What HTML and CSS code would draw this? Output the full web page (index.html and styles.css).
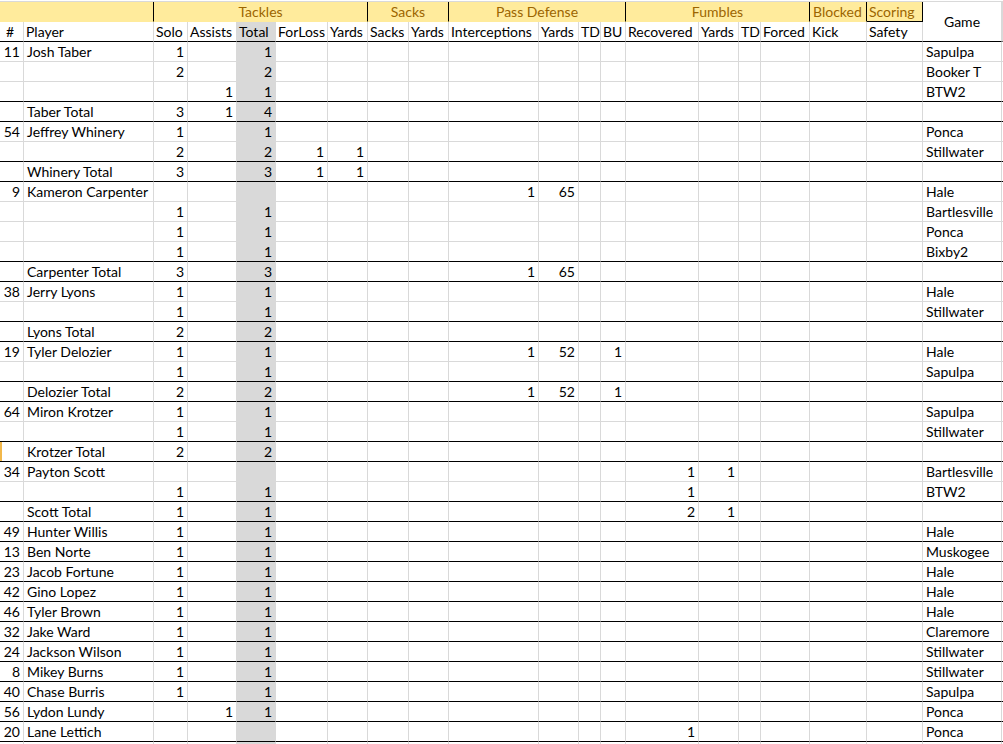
FILE: index.html
```html
<!DOCTYPE html>
<html>
<head>
<meta charset="utf-8">
<title>Defense Stats</title>
<link rel="stylesheet" href="styles.css">
</head>
<body>
<div class="sheet">
  <div class="topline"></div>
  <div class="head">
    <span class="grp g-lead"></span>
    <span class="grp g-tackles">Tackles</span>
    <span class="grp g-sacks">Sacks</span>
    <span class="grp g-pass">Pass Defense</span>
    <span class="grp g-fum">Fumbles</span>
    <span class="grp g-blk">Blocked</span>
    <span class="grp g-score">Scoring</span>
    <span class="game-h">Game</span>
    <span class="extra-h"></span>
    <span class="h hash">#</span><span class="h">Player</span><span class="h">Solo</span><span class="h">Assists</span><span class="h tot">Total</span><span class="h">ForLoss</span><span class="h">Yards</span><span class="h">Sacks</span><span class="h">Yards</span><span class="h">Interceptions</span><span class="h">Yards</span><span class="h">TD</span><span class="h">BU</span><span class="h">Recovered</span><span class="h">Yards</span><span class="h">TD</span><span class="h">Forced</span><span class="h">Kick</span><span class="h">Safety</span>
  </div>

  <div class="row"><span>11</span><span>Josh Taber</span><span>1</span><span></span><span>1</span><span></span><span></span><span></span><span></span><span></span><span></span><span></span><span></span><span></span><span></span><span></span><span></span><span></span><span></span><span>Sapulpa</span><span></span></div>
  <div class="row"><span></span><span></span><span>2</span><span></span><span>2</span><span></span><span></span><span></span><span></span><span></span><span></span><span></span><span></span><span></span><span></span><span></span><span></span><span></span><span></span><span>Booker T</span><span></span></div>
  <div class="row dk"><span></span><span></span><span></span><span>1</span><span>1</span><span></span><span></span><span></span><span></span><span></span><span></span><span></span><span></span><span></span><span></span><span></span><span></span><span></span><span></span><span>BTW2</span><span></span></div>
  <div class="row dk"><span></span><span>Taber Total</span><span>3</span><span>1</span><span>4</span><span></span><span></span><span></span><span></span><span></span><span></span><span></span><span></span><span></span><span></span><span></span><span></span><span></span><span></span><span></span><span></span></div>

  <div class="row"><span>54</span><span>Jeffrey Whinery</span><span>1</span><span></span><span>1</span><span></span><span></span><span></span><span></span><span></span><span></span><span></span><span></span><span></span><span></span><span></span><span></span><span></span><span></span><span>Ponca</span><span></span></div>
  <div class="row dk"><span></span><span></span><span>2</span><span></span><span>2</span><span>1</span><span>1</span><span></span><span></span><span></span><span></span><span></span><span></span><span></span><span></span><span></span><span></span><span></span><span></span><span>Stillwater</span><span></span></div>
  <div class="row dk"><span></span><span>Whinery Total</span><span>3</span><span></span><span>3</span><span>1</span><span>1</span><span></span><span></span><span></span><span></span><span></span><span></span><span></span><span></span><span></span><span></span><span></span><span></span><span></span><span></span></div>

  <div class="row"><span>9</span><span>Kameron Carpenter</span><span></span><span></span><span></span><span></span><span></span><span></span><span></span><span>1</span><span>65</span><span></span><span></span><span></span><span></span><span></span><span></span><span></span><span></span><span>Hale</span><span></span></div>
  <div class="row"><span></span><span></span><span>1</span><span></span><span>1</span><span></span><span></span><span></span><span></span><span></span><span></span><span></span><span></span><span></span><span></span><span></span><span></span><span></span><span></span><span>Bartlesville</span><span></span></div>
  <div class="row"><span></span><span></span><span>1</span><span></span><span>1</span><span></span><span></span><span></span><span></span><span></span><span></span><span></span><span></span><span></span><span></span><span></span><span></span><span></span><span></span><span>Ponca</span><span></span></div>
  <div class="row dk"><span></span><span></span><span>1</span><span></span><span>1</span><span></span><span></span><span></span><span></span><span></span><span></span><span></span><span></span><span></span><span></span><span></span><span></span><span></span><span></span><span>Bixby2</span><span></span></div>
  <div class="row dk"><span></span><span>Carpenter Total</span><span>3</span><span></span><span>3</span><span></span><span></span><span></span><span></span><span>1</span><span>65</span><span></span><span></span><span></span><span></span><span></span><span></span><span></span><span></span><span></span><span></span></div>

  <div class="row"><span>38</span><span>Jerry Lyons</span><span>1</span><span></span><span>1</span><span></span><span></span><span></span><span></span><span></span><span></span><span></span><span></span><span></span><span></span><span></span><span></span><span></span><span></span><span>Hale</span><span></span></div>
  <div class="row dk"><span></span><span></span><span>1</span><span></span><span>1</span><span></span><span></span><span></span><span></span><span></span><span></span><span></span><span></span><span></span><span></span><span></span><span></span><span></span><span></span><span>Stillwater</span><span></span></div>
  <div class="row dk"><span></span><span>Lyons Total</span><span>2</span><span></span><span>2</span><span></span><span></span><span></span><span></span><span></span><span></span><span></span><span></span><span></span><span></span><span></span><span></span><span></span><span></span><span></span><span></span></div>

  <div class="row"><span>19</span><span>Tyler Delozier</span><span>1</span><span></span><span>1</span><span></span><span></span><span></span><span></span><span>1</span><span>52</span><span></span><span>1</span><span></span><span></span><span></span><span></span><span></span><span></span><span>Hale</span><span></span></div>
  <div class="row dk"><span></span><span></span><span>1</span><span></span><span>1</span><span></span><span></span><span></span><span></span><span></span><span></span><span></span><span></span><span></span><span></span><span></span><span></span><span></span><span></span><span>Sapulpa</span><span></span></div>
  <div class="row dk"><span></span><span>Delozier Total</span><span>2</span><span></span><span>2</span><span></span><span></span><span></span><span></span><span>1</span><span>52</span><span></span><span>1</span><span></span><span></span><span></span><span></span><span></span><span></span><span></span><span></span></div>

  <div class="row"><span>64</span><span>Miron Krotzer</span><span>1</span><span></span><span>1</span><span></span><span></span><span></span><span></span><span></span><span></span><span></span><span></span><span></span><span></span><span></span><span></span><span></span><span></span><span>Sapulpa</span><span></span></div>
  <div class="row dk"><span></span><span></span><span>1</span><span></span><span>1</span><span></span><span></span><span></span><span></span><span></span><span></span><span></span><span></span><span></span><span></span><span></span><span></span><span></span><span></span><span>Stillwater</span><span></span></div>
  <div class="row dk sel"><span></span><span>Krotzer Total</span><span>2</span><span></span><span>2</span><span></span><span></span><span></span><span></span><span></span><span></span><span></span><span></span><span></span><span></span><span></span><span></span><span></span><span></span><span></span><span></span></div>

  <div class="row"><span>34</span><span>Payton Scott</span><span></span><span></span><span></span><span></span><span></span><span></span><span></span><span></span><span></span><span></span><span></span><span>1</span><span>1</span><span></span><span></span><span></span><span></span><span>Bartlesville</span><span></span></div>
  <div class="row dk"><span></span><span></span><span>1</span><span></span><span>1</span><span></span><span></span><span></span><span></span><span></span><span></span><span></span><span></span><span>1</span><span></span><span></span><span></span><span></span><span></span><span>BTW2</span><span></span></div>
  <div class="row dk"><span></span><span>Scott Total</span><span>1</span><span></span><span>1</span><span></span><span></span><span></span><span></span><span></span><span></span><span></span><span></span><span>2</span><span>1</span><span></span><span></span><span></span><span></span><span></span><span></span></div>

  <div class="row dk"><span>49</span><span>Hunter Willis</span><span>1</span><span></span><span>1</span><span></span><span></span><span></span><span></span><span></span><span></span><span></span><span></span><span></span><span></span><span></span><span></span><span></span><span></span><span>Hale</span><span></span></div>
  <div class="row dk"><span>13</span><span>Ben Norte</span><span>1</span><span></span><span>1</span><span></span><span></span><span></span><span></span><span></span><span></span><span></span><span></span><span></span><span></span><span></span><span></span><span></span><span></span><span>Muskogee</span><span></span></div>
  <div class="row dk"><span>23</span><span>Jacob Fortune</span><span>1</span><span></span><span>1</span><span></span><span></span><span></span><span></span><span></span><span></span><span></span><span></span><span></span><span></span><span></span><span></span><span></span><span></span><span>Hale</span><span></span></div>
  <div class="row dk"><span>42</span><span>Gino Lopez</span><span>1</span><span></span><span>1</span><span></span><span></span><span></span><span></span><span></span><span></span><span></span><span></span><span></span><span></span><span></span><span></span><span></span><span></span><span>Hale</span><span></span></div>
  <div class="row dk"><span>46</span><span>Tyler Brown</span><span>1</span><span></span><span>1</span><span></span><span></span><span></span><span></span><span></span><span></span><span></span><span></span><span></span><span></span><span></span><span></span><span></span><span></span><span>Hale</span><span></span></div>
  <div class="row dk"><span>32</span><span>Jake Ward</span><span>1</span><span></span><span>1</span><span></span><span></span><span></span><span></span><span></span><span></span><span></span><span></span><span></span><span></span><span></span><span></span><span></span><span></span><span>Claremore</span><span></span></div>
  <div class="row dk"><span>24</span><span>Jackson Wilson</span><span>1</span><span></span><span>1</span><span></span><span></span><span></span><span></span><span></span><span></span><span></span><span></span><span></span><span></span><span></span><span></span><span></span><span></span><span>Stillwater</span><span></span></div>
  <div class="row dk"><span>8</span><span>Mikey Burns</span><span>1</span><span></span><span>1</span><span></span><span></span><span></span><span></span><span></span><span></span><span></span><span></span><span></span><span></span><span></span><span></span><span></span><span></span><span>Stillwater</span><span></span></div>
  <div class="row dk"><span>40</span><span>Chase Burris</span><span>1</span><span></span><span>1</span><span></span><span></span><span></span><span></span><span></span><span></span><span></span><span></span><span></span><span></span><span></span><span></span><span></span><span></span><span>Sapulpa</span><span></span></div>
  <div class="row dk"><span>56</span><span>Lydon Lundy</span><span></span><span>1</span><span>1</span><span></span><span></span><span></span><span></span><span></span><span></span><span></span><span></span><span></span><span></span><span></span><span></span><span></span><span></span><span>Ponca</span><span></span></div>
  <div class="row dk"><span>20</span><span>Lane Lettich</span><span></span><span></span><span></span><span></span><span></span><span></span><span></span><span></span><span></span><span></span><span></span><span>1</span><span></span><span></span><span></span><span></span><span></span><span>Ponca</span><span></span></div>
  <div class="row"><span></span><span></span><span></span><span></span><span></span><span></span><span></span><span></span><span></span><span></span><span></span><span></span><span></span><span></span><span></span><span></span><span></span><span></span><span></span><span></span><span></span></div>
</div>
</body>
</html>
```

FILE: styles.css
```css
:root {
  --cols: 24px 130px 34px 49px 39px 52px 40px 41px 40px 90px 40px 22px 25px 73px 40px 22px 49px 57px 56px 79px 1fr;
  --grid: #d9d9d9;
  --total: #d9d9d9;
}

html, body {
  margin: 0;
  padding: 0;
  background: #fff;
  overflow: hidden;
}

.sheet {
  width: 1003px;
  font-family: Lato, "Liberation Sans", sans-serif;
  font-size: 14px;
  color: #000;
}

.topline {
  height: 1px;
  border-bottom: 1px solid var(--grid);
}

.head {
  display: grid;
  grid-template-columns: var(--cols);
  grid-template-rows: 20px 20px;
}

.head > span,
.row > span {
  box-sizing: border-box;
  height: 20px;
  line-height: 20px;
  white-space: nowrap;
  overflow: hidden;
  border-right: 1px solid var(--grid);
  border-bottom: 1px solid var(--grid);
}

/* group header band */
.grp {
  background: #ffeb9c;
  color: #9c6500;
  text-align: center;
  border-bottom-color: #ffeb9c !important;
  border-right-color: #000 !important;
  grid-row: 1;
}
.g-lead { grid-column: 1 / 3; }
.g-tackles { grid-column: 3 / 8; }
.g-sacks { grid-column: 8 / 10; }
.g-pass { grid-column: 10 / 14; }
.g-fum { grid-column: 14 / 18; }
.g-blk { grid-column: 18 / 19; padding-left: 3px; text-align: left; }
.g-score { grid-column: 19 / 20; border-bottom-color: #000 !important; padding-left: 2px; text-align: left; }

.game-h {
  grid-column: 20 / 21;
  grid-row: 1 / 3;
  height: 40px !important;
  line-height: 40px !important;
  text-align: center;
  border-bottom-color: #000 !important;
}
.extra-h {
  grid-column: 21 / 22;
  grid-row: 1 / 3;
  height: 40px !important;
  border-bottom-color: #000 !important;
}

.h {
  grid-row: 2;
  padding-left: 2px;
  border-bottom-color: #000 !important;
}
.h.hash { padding-left: 6px; }
.h.tot { background: var(--total); }

/* data rows */
.row {
  display: grid;
  grid-template-columns: var(--cols);
}
.row > span {
  text-align: right;
  padding-right: 3px;
}
.row > span:nth-child(2),
.row > span:nth-child(20) {
  text-align: left;
  padding-left: 3px;
  padding-right: 0;
}
.row > span:nth-child(5) {
  background: var(--total);
}
.row.dk > span {
  border-bottom-color: #000;
}
.row.sel > span:first-child {
  box-shadow: inset 2px 0 #f2b84b;
}
```
